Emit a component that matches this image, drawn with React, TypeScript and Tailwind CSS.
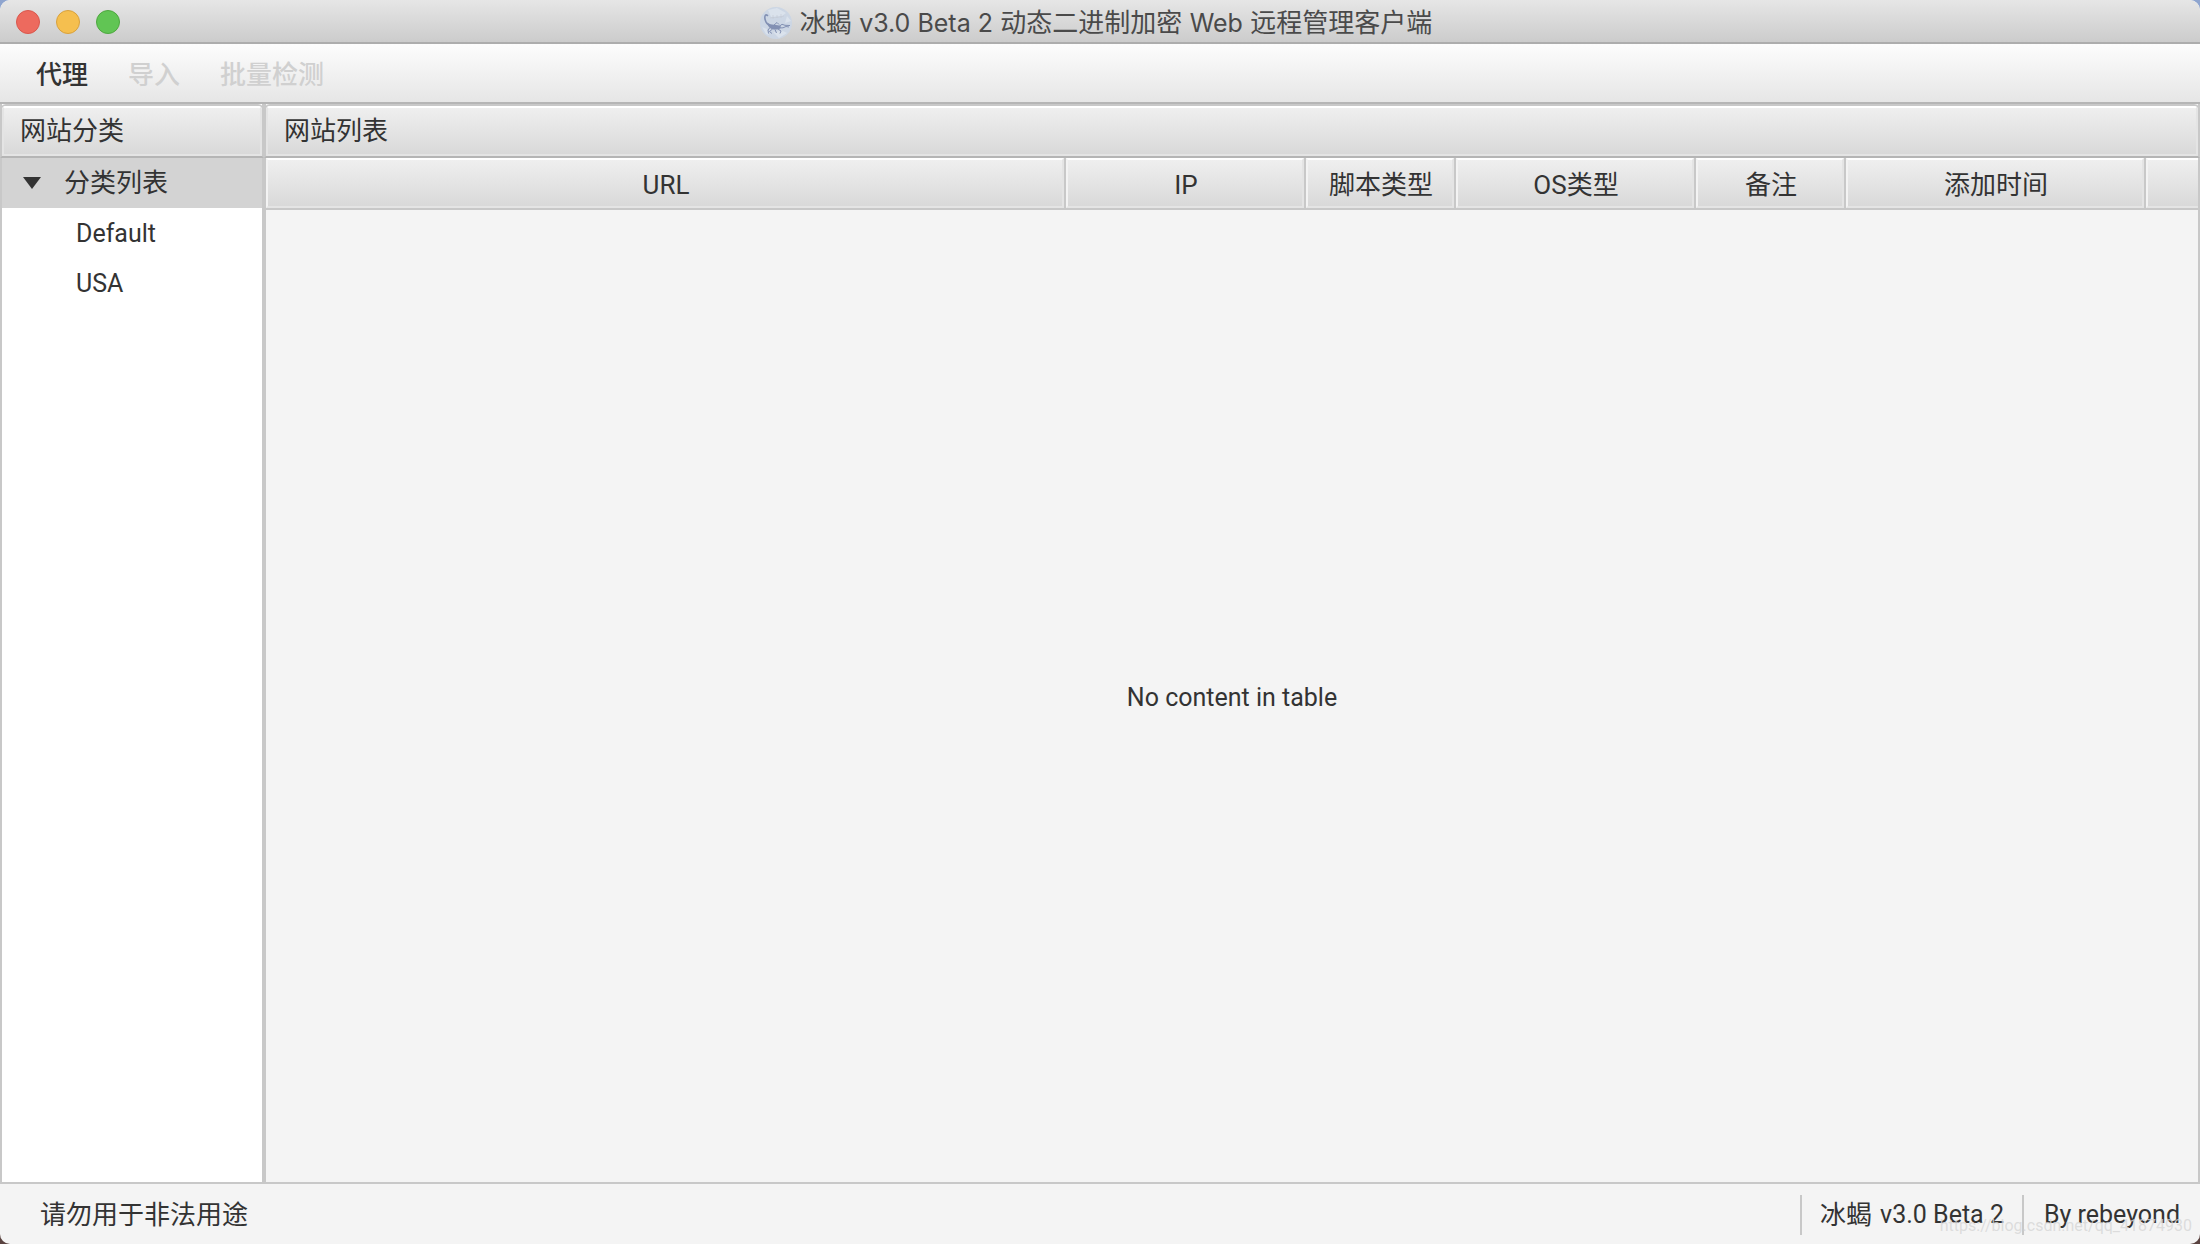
import { useState } from "react"

const columns = [
  { key: "url", label: "URL", width: "w-[800px]" },
  { key: "ip", label: "IP", width: "w-[240px]" },
  { key: "script", label: "脚本类型", width: "w-[150px]" },
  { key: "os", label: "OS类型", width: "w-[240px]" },
  { key: "memo", label: "备注", width: "w-[150px]" },
  { key: "added", label: "添加时间", width: "w-[300px]" },
]

const categories = ["Default", "USA"]

function ScorpionIcon() {
  return (
    <svg className="size-8" viewBox="0 0 32 32" fill="none" aria-hidden="true">
      <circle cx="16" cy="16" r="16" fill="#ccd6e4" />
      <path d="M8 3l9-2 9 5-4 3-11 1ZM2 20l5 2 2 6-3-1ZM13 25l10-1 4 2-8 5ZM27 9l4 5-6 2Z" fill="#dae2ec" />
      <path d="M10 11c4-1 7 0 14-2M13 8v4M17 8v3M21 7v4" stroke="#c4cad4" strokeWidth="0.6" />
      <path
        d="M7.500 8.500C5.500 7 4.800 8.500 4.800 10.500c0 2 .6 3 1.200 4.500.5 1.500 1.500 2.500 3.500 3.500"
        stroke="#8290b3"
        strokeWidth="1.600"
        strokeLinecap="round"
      />
      <path d="M7 15.500c1.500.5 3 2 5 2 3 .3 5 .5 8 1.200 1.500.8 1 2.300-.5 3-3 1.300-7 1.300-9.500-.7C8.500 19.800 7.500 18 7 15.500Z" fill="#8290b3" />
      <path
        d="M19 19.500l3-2.200 3 1 5 .2M19 21l4-.2 3-1.300 3 .5M10 20.500l-2 2.500.5 3.500M12.500 22l-3 2.500 2.500 2M15 22.500l1.500 3.500M18 22l3 2-1 2.500M14 18l3-2.500 2 2"
        stroke="#8290b3"
        strokeWidth="1"
        strokeLinejoin="round"
      />
    </svg>
  )
}

function TitleBar() {
  return (
    <header className="relative flex h-11 items-center justify-center rounded-t-[10px] border-b-2 border-[#adadad] bg-linear-to-b from-[#e6e6e6] to-[#cccccc] pt-1 pr-2">
      <div className="absolute top-2.5 left-4 flex gap-4">
        <button aria-label="Close" className="size-6 rounded-full border border-[#d9574d] bg-[#ed6a5e]" />
        <button aria-label="Minimize" className="size-6 rounded-full border border-[#d8a13d] bg-[#f5bf4f]" />
        <button aria-label="Zoom" className="size-6 rounded-full border border-[#4ea73f] bg-[#61c554]" />
      </div>
      <div className="flex items-center gap-2">
        <ScorpionIcon />
        <h1 className="font-[Inter,'Noto_Sans_CJK_SC',sans-serif] text-[26px] leading-8 text-[#4a4a4a]">
          冰蝎 <span className="text-[25px]">v3.0 Beta 2</span> 动态二进制加密 <span className="text-[25px]">Web</span>{" "}
          远程管理客户端
        </h1>
      </div>
    </header>
  )
}

function MenuBar() {
  return (
    <nav className="flex h-[60px] items-center gap-10 border-b-2 border-[#b5b5b5] bg-linear-to-b from-[#fdfdfd] to-[#e6e6e6] px-9 pt-1 font-medium">
      <button>代理</button>
      <button disabled className="text-[#d0d0d0]">
        导入
      </button>
      <button disabled className="text-[#d0d0d0]">
        批量检测
      </button>
    </nav>
  )
}

function PaneHeader({ title }: { title: string }) {
  return (
    <div className="-mx-0.5 h-[54px] rounded-t-md border-2 border-[#c8c8c8] border-b-[#b5b5b5]">
      <h2 className="flex h-full items-center rounded-t-sm border-2 border-[#e4e4e4] border-t-white bg-linear-to-b from-[#efefef] to-[#d9d9d9] px-4">
        {title}
      </h2>
    </div>
  )
}

function CategoryPane() {
  const [expanded, setExpanded] = useState(true)
  const [selected, setSelected] = useState("root")

  return (
    <aside className="w-66 shrink-0 border-2 border-t-0 border-[#c8c8c8] bg-white">
      <PaneHeader title="网站分类" />
      <div className={selected === "root" ? "flex h-[50px] items-center bg-[#d3d3d3] pl-5" : "flex h-[50px] items-center pl-5"}>
        <button aria-label="Toggle" onClick={() => setExpanded(!expanded)} className="w-[42px]">
          <svg className={expanded ? "h-3 w-5" : "h-3 w-5 -rotate-90"} viewBox="0 0 20 12">
            <path d="M1 0h18L10 12Z" fill="#333333" />
          </svg>
        </button>
        <button onClick={() => setSelected("root")}>分类列表</button>
      </div>
      {expanded && (
        <ul className="text-[25px]">
          {categories.map((name) => (
            <li key={name} className={selected === name ? "bg-[#d3d3d3]" : ""}>
              <button onClick={() => setSelected(name)} className="block h-[50px] w-full pt-0.5 pl-[74px] text-left">
                {name}
              </button>
            </li>
          ))}
        </ul>
      )}
    </aside>
  )
}

function SitePane() {
  return (
    <main className="flex min-w-0 flex-1 flex-col border-2 border-t-0 border-[#c8c8c8]">
      <PaneHeader title="网站列表" />
      <div className="flex flex-1 overflow-hidden">
        <table className="w-full table-fixed border-separate border-spacing-0">
          <thead>
            <tr className="h-[52px]">
              {columns.map((col) => (
                <th key={col.key} className={`${col.width} border-r-2 border-b-2 border-[#c8c8c8] p-0 font-normal`}>
                  <div className="flex h-[50px] items-center justify-center border-2 border-[#e4e4e4] border-t-white border-l-[#f3f3f3] bg-linear-to-b from-[#efefef] to-[#d9d9d9] pt-1 pl-0.5">
                    {col.label}
                  </div>
                </th>
              ))}
              <th className="border-b-2 border-[#c8c8c8] p-0">
                <div className="h-[50px] border-2 border-r-0 border-[#e4e4e4] border-t-white border-l-[#f3f3f3] bg-linear-to-b from-[#efefef] to-[#d9d9d9]" />
              </th>
            </tr>
          </thead>
          <tbody>
            <tr>
              <td colSpan={columns.length + 1} className="pt-1 text-center text-[25px]">
                No content in table
              </td>
            </tr>
          </tbody>
        </table>
      </div>
    </main>
  )
}

function StatusBar() {
  return (
    <footer className="relative flex h-[60px] items-center justify-between pt-0.5 pr-5 pl-10">
      <span>请勿用于非法用途</span>
      <div className="flex h-10 items-center">
        <span className="flex h-10 items-center gap-2 border-l-2 border-[#c8c8c8] px-[18px]">
          冰蝎 <span className="text-[25px]">v3.0 Beta 2</span>
        </span>
        <span className="flex h-10 items-center border-l-2 border-[#c8c8c8] pl-5 text-[25px]">By rebeyond</span>
      </div>
      <span className="pointer-events-none absolute right-2 bottom-2 text-base leading-5 text-[#d6d6d6]/80">
        https://blog.csdn.net/qq_41874930
      </span>
    </footer>
  )
}

export default function App() {
  return (
    <div className="bg-linear-to-b from-[#8fa5cf] to-[#5a4340]">
      <div className="flex min-h-screen flex-col overflow-hidden rounded-[10px] bg-[#f4f4f4] font-[Roboto,'Noto_Sans_CJK_SC',sans-serif] text-[26px] leading-9 text-[#333333]">
        <TitleBar />
        <MenuBar />
        <div className="flex flex-1">
          <CategoryPane />
          <SitePane />
        </div>
        <StatusBar />
      </div>
    </div>
  )
}
